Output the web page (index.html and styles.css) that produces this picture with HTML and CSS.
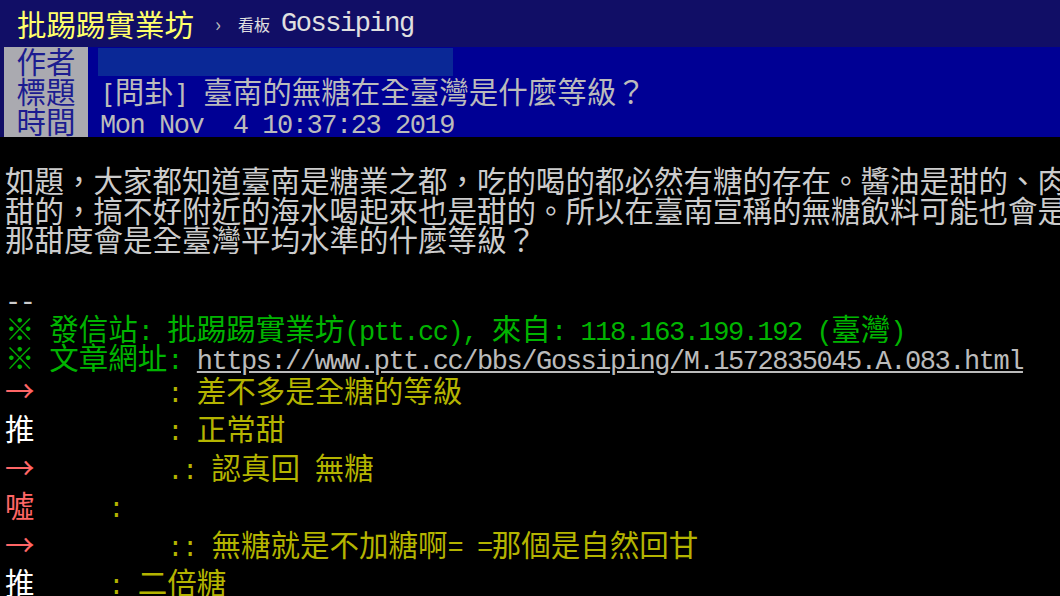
FILE: index.html
```html
<!DOCTYPE html>
<html lang="zh-Hant">
<head>
<meta charset="utf-8">
<title>[問卦] 臺南的無糖在全臺灣是什麼等級？ - 看板 Gossiping - 批踢踢實業坊</title>
<link rel="stylesheet" href="styles.css">
</head>
<body>
<div id="topbar"><span class="logo">批踢踢實業坊</span><span class="sep">›</span><span class="board"><span class="board-label">看板</span><span class="a">Gossiping</span></span></div>
<div class="meta">
<div class="metaline"><span class="meta-tag">作者</span><span class="meta-value"><span class="mask"></span></span></div>
<div class="metaline"><span class="meta-tag">標題</span><span class="meta-value"><span class="a br">[</span>問卦<span class="a br">]</span><span class="a"> </span>臺南的無糖在全臺灣是什麼等級？</span></div>
<div class="metaline"><span class="meta-tag">時間</span><span class="meta-value"><span class="a">Mon Nov  4 10:37:23 2019</span></span></div>
</div>
<div class="content">
<div class="line">如題，大家都知道臺南是糖業之都，吃的喝的都必然有糖的存在。醬油是甜的、肉</div>
<div class="line">甜的，搞不好附近的海水喝起來也是甜的。所以在臺南宣稱的無糖飲料可能也會是</div>
<div class="line">那甜度會是全臺灣平均水準的什麼等級？</div>
<div class="line"></div>
<div class="line"><span class="a">--</span></div>
<div class="line f2">※<span class="a"> </span>發信站<span class="a">: </span>批踢踢實業坊<span class="a">(ptt.cc), </span>來自<span class="a">: 118.163.199.192 (</span>臺灣<span class="a">)</span></div>
<div class="line f2">※<span class="a"> </span>文章網址<span class="a">: </span><a class="url a">https://www.ptt.cc/bbs/Gossiping/M.1572835045.A.083.html</a></div>
<div class="push"><span class="push-tag red">→</span><span class="a"> </span><span class="push-userid a">        </span><span class="push-content"><span class="a">: </span>差不多是全糖的等級</span></div>
<div class="push"><span class="push-tag white">推</span><span class="a"> </span><span class="push-userid a">        </span><span class="push-content"><span class="a">: </span>正常甜</span></div>
<div class="push"><span class="push-tag red">→</span><span class="a"> </span><span class="push-userid a">        </span><span class="push-content"><span class="a">.: </span>認真回<span class="a"> </span>無糖</span></div>
<div class="push"><span class="push-tag red">噓</span><span class="a"> </span><span class="push-userid a">    </span><span class="push-content"><span class="a">:</span></span></div>
<div class="push"><span class="push-tag red">→</span><span class="a"> </span><span class="push-userid a">        </span><span class="push-content"><span class="a">:: </span>無糖就是不加糖啊<span class="a">= =</span>那個是自然回甘</span></div>
<div class="push"><span class="push-tag white">推</span><span class="a"> </span><span class="push-userid a">    </span><span class="push-content"><span class="a">: </span>二倍糖</span></div>
</div>
</body>
</html>
```
FILE: styles.css
```css
html, body {
  margin: 0;
  padding: 0;
  background: #000;
}
body {
  width: 1060px;
  height: 596px;
  overflow: hidden;
  font-family: "Noto Sans CJK TC", "Noto Sans CJK SC", sans-serif;
  font-size: 29.5px;
  color: #cccccc;
}
.a {
  font-family: "Liberation Mono", "DejaVu Sans Mono", monospace;
  font-size: 27px;
  letter-spacing: -1.45px;
  white-space: pre;
}
.br {
  font-family: "DejaVu Sans Mono", monospace;
  font-size: 26px;
  letter-spacing: -0.9px;
}
#topbar {
  height: 47px;
  background: #110e66;
  display: flex;
  align-items: center;
  white-space: nowrap;
}
.logo {
  margin-left: 17px;
  color: #ffff6a;
  font-size: 29.5px;
  line-height: 47px;
}
.sep {
  margin-left: 21px;
  color: #bbb;
  font-size: 20px;
}
.board {
  margin-left: 17px;
  color: #e0e0e0;
  display: flex;
  align-items: baseline;
}
.board-label {
  font-size: 16px;
  margin-right: 11px;
}
.meta {
  background: #110e66;
  padding-left: 4px;
}
.metaline {
  display: flex;
  height: 30px;
  line-height: 26px;
}
.meta-tag {
  width: 84px;
  background: #aaaab0;
  color: #1c1c90;
  text-align: center;
}
.meta-value {
  flex: 1;
  background: #000094;
  color: #bbb;
  padding-left: 12px;
  white-space: pre;
}
.mask {
  display: inline-block;
  width: 355px;
  height: 28px;
  margin: 1px 0 0 -2px;
  background: #0a2896;
  vertical-align: top;
}
.content {
  padding: 28px 0 0 5px;
}
.line {
  height: 29.5px;
  line-height: 29.5px;
  white-space: pre;
}
.f2 {
  color: #00b400;
}
.url {
  color: #bbb;
  text-decoration: underline;
  text-underline-offset: 2px;
}
.push {
  height: 38.6px;
  line-height: 34.6px;
  white-space: pre;
}
.red {
  color: #ff6666;
}
.white {
  color: #fff;
}
.push-content {
  color: #b4b400;
}
```
